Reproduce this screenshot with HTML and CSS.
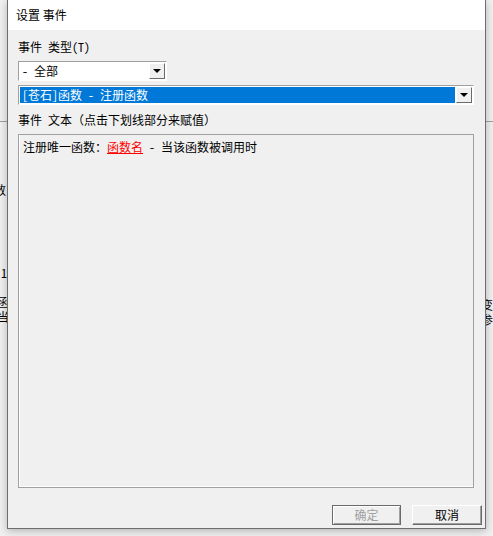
FILE: index.html
```html
<!DOCTYPE html>
<html lang="zh-CN">
<head>
  <meta charset="UTF-8">
  <title>设置 事件</title>
  <link rel="stylesheet" href="styles.css">
</head>
<body>
  <!-- window behind the dialog, only its edges show -->
  <div class="backdrop">
    <div class="back-col back-left">
      <div class="back-rule"></div>
      <p class="frag frag-shu">数</p>
      <p class="frag frag-one">1</p>
      <p class="frag frag-pair">函<br>当</p>
    </div>
    <div class="back-col back-right">
      <div class="back-rule"></div>
      <p class="frag frag-pair-r">变<br>参</p>
    </div>
  </div>

  <div class="dialog">
    <div class="titlebar">设置 事件</div>
    <div class="dialog-body">
      <label class="caption">事件 类型(T)</label>
      <div class="combo combo-small">
        <span class="combo-text">- 全部</span>
        <span class="combo-btn"><i class="arrow"></i></span>
      </div>
      <div class="combo combo-wide">
        <span class="combo-text selected">[苍石]函数 - 注册函数</span>
        <span class="combo-btn"><i class="arrow"></i></span>
      </div>
      <label class="caption caption-text">事件 文本（点击下划线部分来赋值）</label>
      <div class="text-box">
        注册唯一函数：<a class="fill-link">函数名</a> - 当该函数被调用时
      </div>
      <div class="buttons">
        <button class="btn btn-default" disabled>确定</button>
        <button class="btn">取消</button>
      </div>
    </div>
  </div>
</body>
</html>
```

FILE: styles.css
```css
/* Global */
html, body {
  margin: 0;
  padding: 0;
}

body {
  width: 493px;
  height: 536px;
  overflow: hidden;
  position: relative;
  background-color: #f0f0f0;
  font-family: "Noto Sans Mono CJK SC", "Liberation Mono", "Noto Sans CJK SC", monospace;
  font-size: 12px;
  color: #000;
}

/* Window behind the dialog */
.backdrop {
  display: flex;
  justify-content: space-between;
  height: 100%;
}

.back-col {
  width: 12px;
  display: flex;
  flex-direction: column;
}

.back-rule {
  margin-top: 121px;
  height: 0;
  border-top: 1px solid #a0a0a0;
}

.frag {
  margin: 0;
  line-height: 15px;
}

.frag-shu { margin-top: 60px; margin-left: -6px; }
.frag-one { margin-top: 68px; margin-left: 1px; }
.frag-pair { margin-top: 14px; margin-left: -3px; }
.frag-pair-r { margin-top: 175px; margin-left: 0; }

/* The dialog lies over the window above */
.dialog {
  position: absolute;
  left: 7px;
  top: 0;
  width: 477px;
  height: 528px;
  border: 1px solid #6e6e6e;
  border-top: none;
  background-color: #f0f0f0;
  box-shadow: 0 2px 8px rgba(0, 0, 0, 0.25);
  display: flex;
  flex-direction: column;
}

.titlebar {
  height: 30px;
  line-height: 30px;
  padding-left: 8px;
  background-color: #fff;
  font-family: "Noto Sans CJK SC", sans-serif;
}

.dialog-body {
  flex: 1;
  display: flex;
  flex-direction: column;
  padding: 10px 2px 0 10px;
}

.caption {
  line-height: 14px;
  height: 14px;
}

/* Combo boxes */
.combo {
  display: flex;
  height: 20px;
  box-sizing: border-box;
  border: 1px solid;
  border-color: #a0a0a0 #fff #fff #a0a0a0;
  background-color: #fff;
  padding: 1px;
}

.combo-small {
  width: 149px;
  margin-top: 7px;
}

.combo-wide {
  width: 456px;
  margin-top: 4px;
}

.combo-text {
  flex: 1;
  line-height: 16px;
  padding-left: 2px;
  white-space: nowrap;
}

.combo-text.selected {
  background-color: #0078d7;
  color: #fff;
}

.combo-btn {
  width: 16px;
  height: 16px;
  box-sizing: border-box;
  margin-left: 1px;
  background-color: #f0f0f0;
  border: 1px solid;
  border-color: #fff #6a6a6a #6a6a6a #fff;
  display: flex;
  align-items: center;
  justify-content: center;
}

.arrow {
  width: 0;
  height: 0;
  border-left: 4px solid transparent;
  border-right: 4px solid transparent;
  border-top: 4px solid #000;
}

.caption-text {
  margin-top: 8px;
}

/* Event text */
.text-box {
  margin-top: 7px;
  width: 456px;
  height: 354px;
  box-sizing: border-box;
  border: 1px solid #a0a0a0;
  box-shadow: inset 1px 0 0 #fff, inset 0 -1px 0 #fff;
  padding: 4px;
  line-height: 16px;
  white-space: nowrap;
}

.fill-link {
  color: #ff0000;
  text-decoration: underline;
}

/* Buttons */
.buttons {
  display: flex;
  justify-content: flex-end;
  gap: 11px;
  margin-top: 17px;
  padding-right: 1px;
}

.btn {
  width: 70px;
  height: 20px;
  padding: 0;
  font-family: "Noto Sans CJK SC", sans-serif;
  font-size: 12px;
  line-height: 16px;
  background-color: #f0f0f0;
  color: #000;
  border: 1px solid;
  border-color: #fff #6a6a6a #6a6a6a #fff;
  box-shadow: inset -1px -1px 0 #a0a0a0;
}

.btn-default {
  width: 69px;
  border: 1px solid #6a6a6a;
  box-shadow: inset 1px 1px 0 #fff, inset -1px -1px 0 #a0a0a0;
  color: #a0a0a0;
}
```
